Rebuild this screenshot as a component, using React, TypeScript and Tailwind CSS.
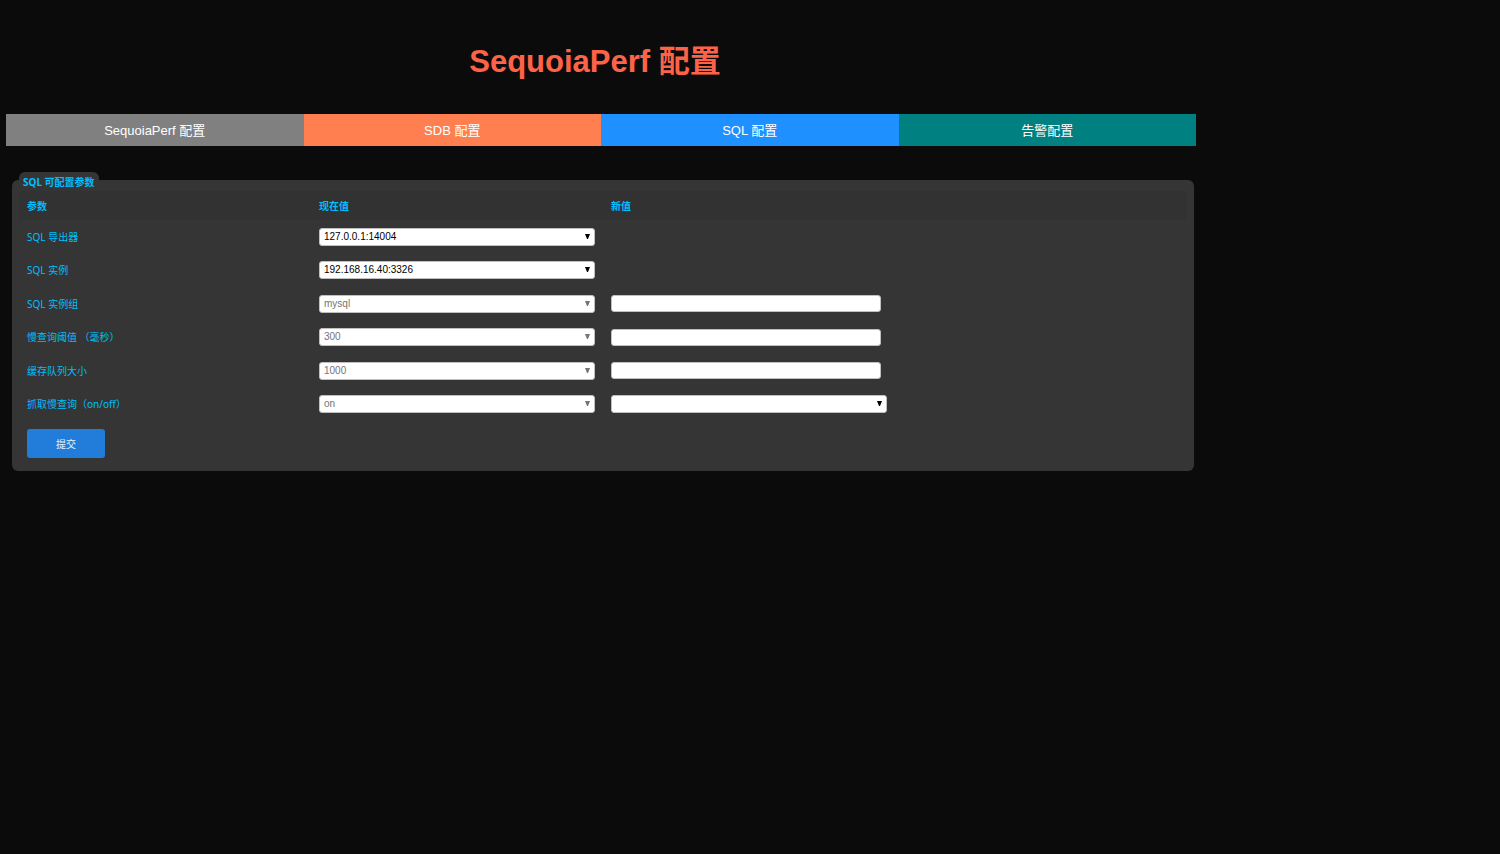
import type { ReactNode } from "react";

const tabs = [
  { label: "SequoiaPerf 配置", color: "bg-[#808080]" },
  { label: "SDB 配置", color: "bg-[#ff7f50]" },
  { label: "SQL 配置", color: "bg-[#1e90ff]" },
  { label: "告警配置", color: "bg-[#008080]" },
];

type Param = {
  id: string;
  label: string;
  value: string;
  locked?: boolean;
  edit?: "text" | "switch";
};

const params: Param[] = [
  { id: "exporter", label: "SQL 导出器", value: "127.0.0.1:14004" },
  { id: "instance", label: "SQL 实例", value: "192.168.16.40:3326" },
  { id: "group", label: "SQL 实例组", value: "mysql", locked: true, edit: "text" },
  { id: "threshold", label: "慢查询阈值 （毫秒）", value: "300", locked: true, edit: "text" },
  { id: "queue", label: "缓存队列大小", value: "1000", locked: true, edit: "text" },
  { id: "capture", label: "抓取慢查询（on/off）", value: "on", locked: true, edit: "switch" },
];

function Select({
  id,
  label,
  disabled,
  children,
}: {
  id: string;
  label?: string;
  disabled?: boolean;
  children: ReactNode;
}) {
  return (
    <div className="relative">
      <select
        id={id}
        aria-label={label}
        disabled={disabled}
        className="block h-[18px] w-full appearance-none rounded-[3px] border border-[#c0c0c0] bg-white pr-4 pl-1 font-['Liberation_Sans',sans-serif] text-[10px] leading-4 text-black disabled:text-[#757575] disabled:opacity-100"
      >
        {children}
      </select>
      <svg
        viewBox="0 0 5 5"
        aria-hidden="true"
        className={`pointer-events-none absolute top-1.5 right-[5px] size-[5px] ${
          disabled ? "fill-[#757575]" : "fill-black"
        }`}
      >
        <path d="M0 0h5L3 5H2z" />
      </svg>
    </div>
  );
}

export default function App() {
  return (
    <div className="min-h-screen bg-[#0b0b0b] font-['Liberation_Sans','Noto_Sans_CJK_SC',sans-serif]">
      <div className="w-4/5 pl-1.5">
        <h1 className="pt-10 pr-4 pb-[30px] text-center text-[31px] leading-[44px] font-bold text-[#ff6347]">
          SequoiaPerf 配置
        </h1>

        <nav className="mr-1 grid grid-cols-4">
          {tabs.map((tab) => (
            <a
              key={tab.label}
              href="#"
              className={`h-8 pt-px text-center text-[13px] leading-8 text-white ${tab.color}`}
            >
              {tab.label}
            </a>
          ))}
        </nav>

        <form onSubmit={(e) => e.preventDefault()} className="mt-[26px] mr-1.5 ml-1.5">
          <fieldset className="min-w-0 rounded-md bg-[#353535] px-[7px] pb-[13px] font-['Noto_Sans','Noto_Sans_CJK_SC',sans-serif] text-[10px] leading-3 text-[#00bfff]">
            <legend className="rounded-md bg-[#353535] px-1 pt-[5px] leading-[11px] font-bold">
              SQL 可配置参数
            </legend>
            <table className="mt-[3px] h-[230px] w-full table-fixed border-collapse">
              <thead>
                <tr className="h-[29px] bg-[#323232] text-left">
                  <th className="px-2">参数</th>
                  <th className="px-2">现在值</th>
                  <th className="px-2">新值</th>
                  <th aria-label="备注" />
                </tr>
              </thead>
              <tbody>
                {params.map((p) => (
                  <tr key={p.id}>
                    <td className="px-2">
                      <label htmlFor={p.id}>{p.label}</label>
                    </td>
                    <td className="px-2">
                      <Select id={p.id} disabled={p.locked}>
                        <option>{p.value}</option>
                      </Select>
                    </td>
                    <td className="px-2">
                      {p.edit === "text" && (
                        <input
                          type="text"
                          aria-label={p.label}
                          className="block h-[17px] w-[98%] rounded-[3px] border border-[#c0c0c0] bg-white px-1 text-black"
                        />
                      )}
                      {p.edit === "switch" && (
                        <Select id={`${p.id}-new`} label={p.label}>
                          <option />
                          <option>on</option>
                          <option>off</option>
                        </Select>
                      )}
                    </td>
                    <td />
                  </tr>
                ))}
              </tbody>
            </table>
            <button
              type="submit"
              className="mt-2 ml-2 block h-[29px] w-[78px] rounded-[3px] bg-[#217dd9] text-white/90"
            >
              提交
            </button>
          </fieldset>
        </form>
      </div>
    </div>
  );
}
